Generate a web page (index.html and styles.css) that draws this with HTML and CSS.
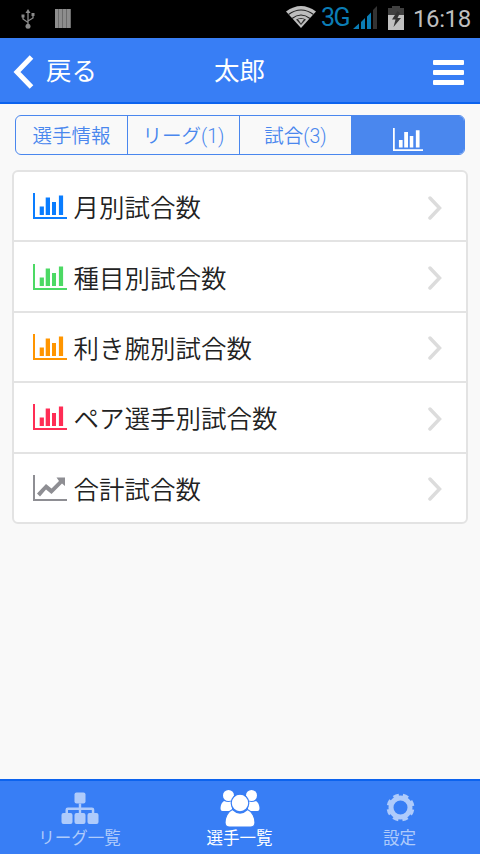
FILE: index.html
```html
<!DOCTYPE html>
<html lang="ja">
<head>
  <meta charset="UTF-8">
  <meta name="viewport" content="width=device-width, initial-scale=1">
  <title>太郎</title>
  <link rel="stylesheet" href="styles.css">
</head>
<body>
  <svg class="symbols" aria-hidden="true">
    <symbol id="chart-bar" viewBox="0 0 34 26">
      <path d="M0 0h2v24h32v2H0z M6.700 13.500h4.200v8.500H6.700z M12.700 4.500H17v17.500h-4.300z M19 9h4v13h-4z M25.900 2.500h4.200v19.500h-4.200z"/>
    </symbol>
    <symbol id="chart-line" viewBox="0 0 34 26">
      <path d="M0 0h2v24h32v2H0z M4 18.500l9-9.500 5.500 4.500L26 6l-2.500-3.500H32V11l-3-2.500L18.500 19l-5.500-4.500L7 21.500z"/>
    </symbol>
    <symbol id="arrow-right" viewBox="0 0 16 24">
      <path d="M3 2l9.500 10L3 22" fill="none" stroke="#dcdcdc" stroke-width="3.500" stroke-linecap="round"/>
    </symbol>
  </svg>

  <div class="status-bar">
    <svg class="status-usb" viewBox="0 0 14 20">
      <g fill="none" stroke="#8a8a8a" stroke-width="1.300">
        <path d="M7 3v13M7 13.500L2 10V7M7 12l5-3V6"/>
      </g>
      <path fill="#8a8a8a" d="M7 0l2.500 4h-5z M.5 5.500h3v3h-3z M10.500 4h3v3h-3z"/>
      <circle cx="7" cy="17.200" r="2.500" fill="#8a8a8a"/>
    </svg>
    <svg class="status-bars" viewBox="0 0 16 19">
      <path fill="#6b6b6b" d="M0 0h16v19H0z"/>
      <path fill="#8d8d8d" d="M0 0h3v19H0z M4 0h3v19H4z M8 0h3v19H8z M12 0h3v19h-3z"/>
    </svg>
    <svg class="status-wifi" viewBox="0 0 30 22">
      <path fill="#bebebe" d="M0 5.500Q15-5.500 30 5.500L15 22z"/>
      <path d="M2.500 8.500Q15-.5 27.500 8.500M6 12.500Q15 5.500 24 12.500" fill="none" stroke="#222" stroke-width="1.200"/>
      <path d="M10 13.500q5-3 10 0L15 19z" fill="#333"/>
      <path d="M12 13h6l-3 4.500z" fill="#bebebe"/>
    </svg>
    <span class="status-network">3G</span>
    <svg class="status-signal" viewBox="0 0 24 23">
      <path fill="#0b7db5" d="M0 23l6-5.500V23z M8 16l4-4v11H8z M14 10.500l4-4V23h-4z"/>
      <path fill="#333" d="M20 4l4-4v23h-4z"/>
    </svg>
    <svg class="status-battery" viewBox="0 0 16 24">
      <path fill="#404040" d="M4 0h8v2h4v22H0V2h4z"/>
      <path fill="#c0c0c0" d="M0 9h16v15H0z"/>
      <path fill="#333" d="M9.500 5L4 13.500h3.500L5.500 21l7.500-9H9.500L12 7z"/>
    </svg>
    <span class="status-time">16:18</span>
  </div>

  <header class="header">
    <button class="back-btn">
      <svg class="back-icon" viewBox="0 0 22 34">
        <path d="M18.500 2L4 17l14.500 15" fill="none" stroke="#fff" stroke-width="5"/>
      </svg>
      <span class="back-text">戻る</span>
    </button>
    <h1 class="title">太郎</h1>
    <button class="menu-btn" aria-label="メニュー">
      <span></span><span></span><span></span>
    </button>
  </header>

  <main class="content">
    <div class="tabs">
      <div class="tab">選手情報</div>
      <div class="tab">リーグ(1)</div>
      <div class="tab">試合(3)</div>
      <div class="tab active"><svg class="tab-icon"><use href="#chart-bar"/></svg></div>
    </div>

    <ul class="list">
      <li class="item">
        <svg class="item-icon blue"><use href="#chart-bar"/></svg>
        <span class="item-name">月別試合数</span>
        <svg class="item-arrow"><use href="#arrow-right"/></svg>
      </li>
      <li class="item">
        <svg class="item-icon green"><use href="#chart-bar"/></svg>
        <span class="item-name">種目別試合数</span>
        <svg class="item-arrow"><use href="#arrow-right"/></svg>
      </li>
      <li class="item">
        <svg class="item-icon orange"><use href="#chart-bar"/></svg>
        <span class="item-name">利き腕別試合数</span>
        <svg class="item-arrow"><use href="#arrow-right"/></svg>
      </li>
      <li class="item">
        <svg class="item-icon red"><use href="#chart-bar"/></svg>
        <span class="item-name">ペア選手別試合数</span>
        <svg class="item-arrow"><use href="#arrow-right"/></svg>
      </li>
      <li class="item">
        <svg class="item-icon gray"><use href="#chart-line"/></svg>
        <span class="item-name">合計試合数</span>
        <svg class="item-arrow"><use href="#arrow-right"/></svg>
      </li>
    </ul>
  </main>

  <nav class="tab-bar">
    <a class="nav-item">
      <svg class="nav-icon" viewBox="0 0 40 38">
        <g fill="currentColor">
          <rect x="14.500" y="3.500" width="11" height="11" rx="2"/>
          <rect x="1.500" y="24" width="11" height="11" rx="2"/>
          <rect x="14.500" y="24" width="11" height="11" rx="2"/>
          <rect x="27.500" y="24" width="11" height="11" rx="2"/>
          <path d="M18.800 14.500h2.400v4H32q2.300 0 2.300 2.300V24h-2.500v-3H21.200v3h-2.400v-3H8v3H5.500v-3.200q0-2.300 2.300-2.300h11z"/>
        </g>
      </svg>
      <span>リーグ一覧</span>
    </a>
    <a class="nav-item active">
      <svg class="nav-icon" viewBox="0 0 40 38">
        <g fill="currentColor">
          <circle cx="8.500" cy="6.500" r="5.500"/>
          <circle cx="31.500" cy="6.500" r="5.500"/>
          <path d="M4 12q4.500 2 8 0v9l-1 1H2.500Q.5 22 .5 19q.3-5 3.500-7z"/>
          <path d="M36 12q-4.500 2-8 0v9l1 1h8.500q2 0 2-3-.3-5-3.500-7z"/>
        </g>
        <g fill="currentColor" stroke="#387ef5" stroke-width="1.200">
          <path d="M12.500 20.500q7.500 7 15 0c5 2 7.500 8 7.500 13 0 3-1.500 4.500-4.500 4.500h-21C6.500 38 5 36.500 5 33.500c0-5 2.500-11 7.500-13z"/>
          <circle cx="20" cy="14" r="8.800"/>
        </g>
      </svg>
      <span>選手一覧</span>
    </a>
    <a class="nav-item">
      <svg class="nav-icon" viewBox="0 0 40 38">
        <g fill="none" stroke="currentColor">
          <circle cx="20.500" cy="18.500" r="9.500" stroke-width="5"/>
          <circle cx="20.500" cy="18.500" r="12" stroke-width="3.800" stroke-dasharray="5.400 4.025" stroke-dashoffset="-2.010"/>
        </g>
      </svg>
      <span>設定</span>
    </a>
  </nav>
</body>
</html>
```

FILE: styles.css
```css
* {
  box-sizing: border-box;
}

body {
  margin: 0;
  height: 854px;
  display: flex;
  flex-direction: column;
  overflow: hidden;
  background: #f9f9f9;
  color: #222;
  font-family: Roboto, "Noto Sans CJK JP", sans-serif;
}

svg {
  display: block;
  flex: none;
}

button {
  padding: 0;
  border: none;
  background: none;
  color: inherit;
  font: inherit;
}

.symbols {
  position: absolute;
  width: 0;
  height: 0;
}

/* ステータスバー */
.status-bar {
  flex: none;
  display: flex;
  align-items: flex-start;
  height: 38px;
  padding-left: 21px;
  background: #000;
  line-height: 38px;
}

.status-usb {
  width: 14px;
  height: 20px;
  margin-top: 9px;
}

.status-bars {
  width: 16px;
  height: 19px;
  margin: 9px 0 0 20px;
}

.status-wifi {
  width: 30px;
  height: 22px;
  margin: 6px 0 0 215px;
}

.status-network {
  width: 34px;
  padding-left: 5px;
  color: #0b7db5;
  font-size: 25px;
  line-height: 36px;
  letter-spacing: -1.500px;
}

.status-signal {
  width: 24px;
  height: 23px;
  margin: 6px 0 0 3px;
}

.status-battery {
  width: 16px;
  height: 24px;
  margin: 6px 0 0 11px;
}

.status-time {
  margin-left: 9px;
  color: #bebebe;
  font-size: 24px;
  line-height: 39px;
  letter-spacing: -0.400px;
}

/* ヘッダー */
.header {
  flex: none;
  display: grid;
  grid-template-columns: 1fr auto 1fr;
  align-items: center;
  height: 66px;
  padding: 0 16px 0 13px;
  border-bottom: 2px solid #0c63ee;
  background: #387ef5;
  color: #fff;
  font-size: 25.500px;
}

.back-btn {
  display: flex;
  align-items: center;
  gap: 11px;
}

.back-icon {
  width: 22px;
  height: 34px;
  margin-top: 4px;
}

.back-text {
  padding-bottom: 3px;
}

.title {
  margin: 0;
  padding: 0 0 3px 2px;
  font-size: 25.500px;
  font-weight: 400;
}

.menu-btn {
  justify-self: end;
  display: flex;
  flex-direction: column;
  gap: 5px;
  margin-top: 4px;
}

.menu-btn span {
  width: 31px;
  height: 5px;
  border-radius: 1px;
  background: #fff;
}

.content {
  flex: 1;
  padding: 11px 12px 0;
}

/* タブ */
.tabs {
  display: flex;
  height: 40px;
  margin: 0 3px;
  overflow: hidden;
  border: 1px solid #4a87ee;
  border-radius: 6px;
}

.tab {
  width: 112px;
  display: flex;
  align-items: center;
  justify-content: center;
  padding-bottom: 1px;
  border-right: 1px solid #4a87ee;
  color: #4a87ee;
  font-size: 19.500px;
  font-weight: 350;
}

.tab.active {
  flex: 1;
  border-right: none;
  background: #4a87ee;
  color: #fff;
}

.tab-icon {
  width: 30px;
  height: 23px;
  margin-top: 9px;
  fill: currentColor;
}

/* リスト */
.list {
  margin: 15px 0 0;
  padding: 0;
  list-style: none;
  overflow: hidden;
  border: 2px solid #e3e3e3;
  border-radius: 6px;
  background: #fff;
}

.item {
  display: flex;
  align-items: center;
  height: 70.400px;
  padding: 0 23px 0 19px;
  border-bottom: 2px solid #e3e3e3;
}

.item:last-child {
  height: 68.400px;
  border-bottom: none;
}

.item-icon {
  width: 34px;
  height: 26px;
}

.item-name {
  flex: 1;
  padding: 0 0 1px 6.500px;
  font-size: 25.500px;
  font-weight: 350;
  white-space: nowrap;
}

.item-arrow {
  width: 16px;
  height: 24px;
  margin-top: 3px;
}

.blue { fill: #0a7dff; }
.green { fill: #4cd964; }
.orange { fill: #ff9500; }
.red { fill: #ff2d55; }
.gray { fill: #8e8e93; }

/* 下部タブバー */
.tab-bar {
  flex: none;
  display: flex;
  height: 75px;
  border-top: 2px solid #0c63ee;
  background: #387ef5;
}

.nav-item {
  flex: 1;
  display: flex;
  flex-direction: column;
  align-items: center;
  padding-top: 8px;
  color: #fff;
  font-size: 16.500px;
  line-height: 24px;
}

.nav-item span {
  margin-left: -1px;
}

.nav-item:not(.active) {
  color: #afcbfb;
}

.nav-icon {
  width: 40px;
  height: 38px;
}
```
